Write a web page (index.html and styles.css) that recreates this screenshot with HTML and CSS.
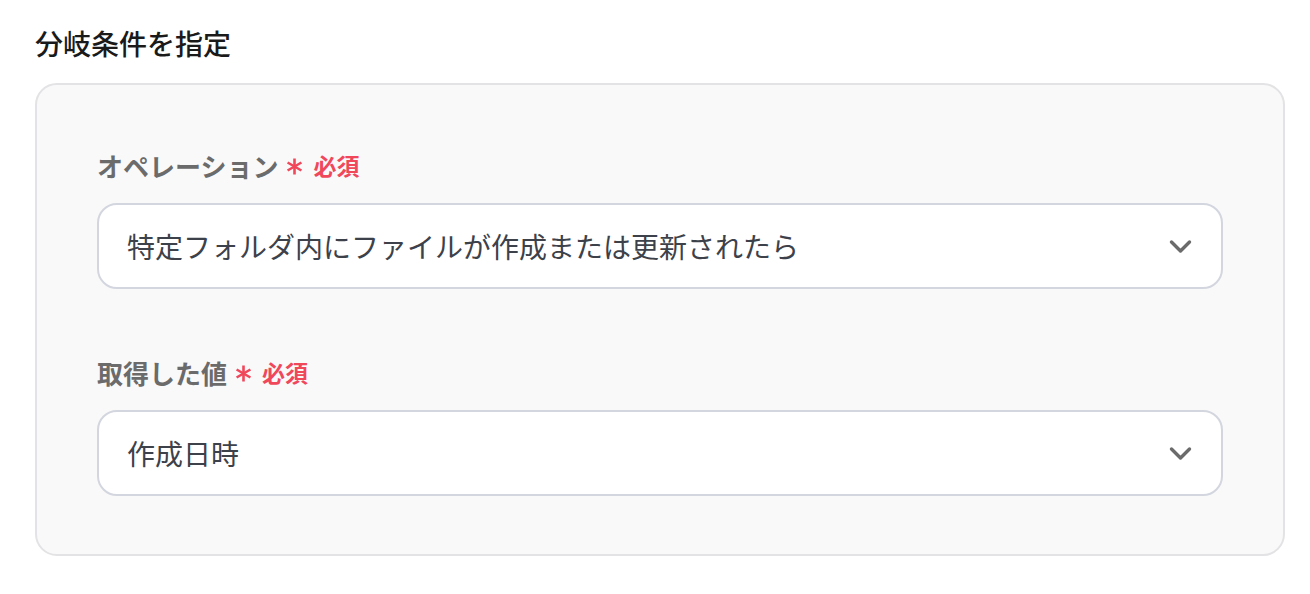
FILE: index.html
```html
<!DOCTYPE html>
<html lang="ja">
<head>
<meta charset="utf-8">
<link rel="stylesheet" href="styles.css">
</head>
<body>
<div class="page">
  <h2 class="title">分岐条件を指定</h2>
  <div class="panel">
    <div class="field">
      <div class="label">オペレーション<span class="req"><svg class="ast" width="17" height="17" viewBox="0 0 17 17"><g stroke="#f0475b" stroke-width="2.6" stroke-linecap="butt"><line x1="8.5" y1="0.5" x2="8.5" y2="16.5"/><line x1="1.6" y1="4.5" x2="15.4" y2="12.5"/><line x1="1.6" y1="12.5" x2="15.4" y2="4.5"/></g></svg>必須</span></div>
      <div class="select">
        <span class="value">特定フォルダ内にファイルが作成または更新されたら</span>
        <svg class="chev" width="23" height="15" viewBox="0 0 23 15"><path d="M2.5 3 L11.5 12 L20.5 3" fill="none" stroke="#6b6b6b" stroke-width="3.4" stroke-linecap="round" stroke-linejoin="round"/></svg>
      </div>
    </div>
    <div class="field">
      <div class="label">取得した値<span class="req"><svg class="ast" width="17" height="17" viewBox="0 0 17 17"><g stroke="#f0475b" stroke-width="2.6" stroke-linecap="butt"><line x1="8.5" y1="0.5" x2="8.5" y2="16.5"/><line x1="1.6" y1="4.5" x2="15.4" y2="12.5"/><line x1="1.6" y1="12.5" x2="15.4" y2="4.5"/></g></svg>必須</span></div>
      <div class="select">
        <span class="value">作成日時</span>
        <svg class="chev" width="23" height="15" viewBox="0 0 23 15"><path d="M2.5 3 L11.5 12 L20.5 3" fill="none" stroke="#6b6b6b" stroke-width="3.4" stroke-linecap="round" stroke-linejoin="round"/></svg>
      </div>
    </div>
  </div>
</div>
</body>
</html>
```
FILE: styles.css
```css
* { box-sizing: border-box; }
body {
  margin: 0;
  background: #ffffff;
  font-family: "Noto Sans CJK JP", "Noto Sans", sans-serif;
}
.page {
  padding: 23px 25px 0 35px;
}
.title {
  margin: 0;
  font-size: 28px;
  line-height: 40px;
  font-weight: 500;
  color: #1a1a1a;
}
.panel {
  margin-top: 20px;
  width: 1250px;
  height: 473px;
  border: 2px solid #e3e3e5;
  border-radius: 22px;
  background: #f9f9fa;
  padding: 62px 60px 0 60px;
  display: flex;
  flex-direction: column;
  gap: 65px;
}
.field {
  display: flex;
  flex-direction: column;
  gap: 20px;
}
.label {
  display: flex;
  align-items: center;
  height: 36px;
  font-size: 26px;
  font-weight: 700;
  color: #6b6b6b;
}
.req {
  display: flex;
  align-items: center;
  margin-left: 8px;
  font-size: 23px;
  font-weight: 700;
  color: #f0475b;
}
.ast {
  display: block;
  margin-right: 10px;
  margin-top: 2px;
}
.select {
  height: 86px;
  border: 2px solid #d3d6de;
  border-radius: 20px;
  background: #ffffff;
  display: flex;
  align-items: center;
  justify-content: space-between;
  padding: 0 29px 0 28px;
}
.value {
  font-size: 28px;
  color: #3d4149;
}
.chev { display: block; }
```
